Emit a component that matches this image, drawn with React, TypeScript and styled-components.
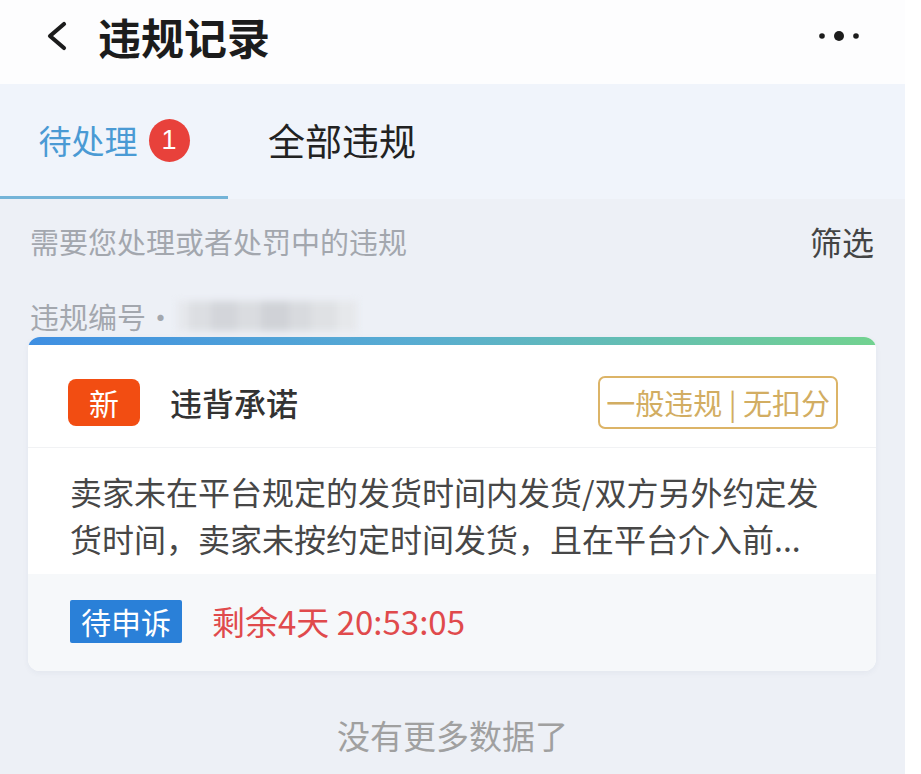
import { FC } from 'react';
import styled, { createGlobalStyle } from 'styled-components';

const GlobalStyle = createGlobalStyle`
  html, body {
    margin: 0;
    padding: 0;
    background: #ffffff;
  }
  body {
    font-family: "Noto Sans CJK SC", "Noto Sans", sans-serif;
  }
  * {
    box-sizing: border-box;
  }
`;

const Page = styled.div`
  width: 905px;
  min-height: 774px;
  background: #edf0f6;
  display: flex;
  flex-direction: column;
`;

const Header = styled.header`
  height: 84px;
  padding: 0 42px 12px 44px;
  background: #fdfdfe;
  display: flex;
  align-items: center;
  gap: 28px;
`;

const Title = styled.h1`
  margin: 0;
  flex: 1;
  font-size: 43px;
  line-height: 50px;
  font-weight: 700;
  color: #1c1c1c;
`;

const TabBar = styled.nav`
  height: 115px;
  background: #f0f4fb;
  display: flex;
`;

const Tab = styled.div<{ $active?: boolean }>`
  width: 228px;
  display: flex;
  align-items: center;
  justify-content: center;
  border-bottom: 3px solid ${({ $active }) => ($active ? '#74b4d8' : 'transparent')};
  font-size: ${({ $active }) => ($active ? '33px' : '37px')};
  color: ${({ $active }) => ($active ? '#4a9ad4' : '#222222')};
`;

const Badge = styled.span`
  width: 41px;
  height: 43px;
  margin-left: 11px;
  border-radius: 50%;
  background: #e8413b;
  color: #ffffff;
  font-family: "Liberation Sans", Arial, sans-serif;
  font-size: 27px;
  display: flex;
  align-items: center;
  justify-content: center;
`;

const SubRow = styled.div`
  height: 84px;
  padding: 0 31px 0 30px;
  display: flex;
  align-items: center;
  justify-content: space-between;
`;

const Hint = styled.span`
  font-size: 29px;
  color: #a3a7ae;
`;

const Filter = styled.span`
  font-size: 32px;
  color: #444444;
`;

const NumberRow = styled.div`
  height: 54px;
  padding: 12px 30px 0;
  display: flex;
  align-items: center;
  font-size: 29px;
  color: #a3a7ae;
`;

const Blurred = styled.span`
  margin-left: 2px;
  display: flex;
  align-items: center;
  filter: blur(3.5px);
`;

const Blot = styled.span<{ $w: number; $tone: string }>`
  width: ${({ $w }) => $w}px;
  height: 30px;
  background: ${({ $tone }) => $tone};
`;

const Card = styled.section`
  margin: 0 29px 0 28px;
  border-radius: 12px;
  overflow: hidden;
  background: #ffffff;
  box-shadow: 0 2px 6px rgba(40, 60, 90, 0.05);
`;

const CardStripe = styled.div`
  height: 8px;
  background: linear-gradient(90deg, #3f8fe2 0%, #58acd2 45%, #72d290 100%);
`;

const CardHead = styled.div`
  height: 103px;
  padding: 12px 38px 0 40px;
  display: flex;
  align-items: center;
  border-bottom: 1px solid #f1f2f4;
`;

const NewMark = styled.span`
  width: 72px;
  height: 47px;
  border-radius: 8px;
  background: #f24d12;
  color: #ffffff;
  font-size: 30px;
  display: flex;
  align-items: center;
  justify-content: center;
`;

const CaseTitle = styled.span`
  flex: 1;
  margin-left: 30px;
  font-size: 32px;
  font-weight: 500;
  color: #333333;
`;

const Level = styled.span`
  height: 53px;
  padding: 0 6px;
  border: 2px solid #dcb467;
  border-radius: 7px;
  color: #d2ad62;
  font-size: 29px;
  display: flex;
  align-items: center;
  white-space: pre;
`;

const Desc = styled.p`
  margin: 0;
  padding: 20px 42px 12px;
  font-size: 32px;
  line-height: 47px;
  color: #474747;
`;

const CardFoot = styled.div`
  height: 97px;
  padding: 0 42px 3px;
  background: #f6f8fa;
  display: flex;
  align-items: center;
  gap: 30px;
`;

const Status = styled.span`
  height: 43px;
  padding: 0 11px;
  border-radius: 2px;
  background: #2a80d8;
  color: #ffffff;
  font-size: 30px;
  display: flex;
  align-items: center;
`;

const Countdown = styled.span`
  font-size: 33px;
  color: #e04a4c;
`;

const EndNote = styled.div`
  margin-top: 44px;
  line-height: 40px;
  text-align: center;
  font-size: 33px;
  color: #a0a0a0;
`;

const BackIcon: FC = () => (
  <svg width="26" height="30" viewBox="0 0 26 30">
    <polyline points="20,3 6,15 20,27" fill="none" stroke="#1c1c1c" strokeWidth="4.2" strokeLinecap="round" strokeLinejoin="round" />
  </svg>
);

const MoreIcon: FC = () => (
  <svg width="48" height="14" viewBox="0 0 48 14">
    <circle cx="7" cy="7" r="2.8" fill="#1c1c1c" />
    <circle cx="24" cy="7" r="5" fill="#1c1c1c" />
    <circle cx="41" cy="7" r="2.8" fill="#1c1c1c" />
  </svg>
);

const blots = [
  { w: 12, tone: '#e6e8ec' },
  { w: 22, tone: '#dcdee2' },
  { w: 26, tone: '#d3d5da' },
  { w: 24, tone: '#dadce0' },
  { w: 28, tone: '#d0d2d7' },
  { w: 22, tone: '#d8dade' },
  { w: 26, tone: '#dfe1e4' },
  { w: 20, tone: '#e6e8eb' },
];

const App: FC = () => {
  return (
    <>
      <GlobalStyle />
      <Page>
        <Header>
          <BackIcon />
          <Title>违规记录</Title>
          <MoreIcon />
        </Header>

        <TabBar>
          <Tab $active>
            待处理
            <Badge>1</Badge>
          </Tab>
          <Tab>全部违规</Tab>
        </TabBar>

        <SubRow>
          <Hint>需要您处理或者处罚中的违规</Hint>
          <Filter>筛选</Filter>
        </SubRow>

        <NumberRow>
          违规编号·
          <Blurred>
            { blots.map((b, i) => (
              <Blot key={ i } $w={ b.w } $tone={ b.tone } />
            )) }
          </Blurred>
        </NumberRow>

        <Card>
          <CardStripe />
          <CardHead>
            <NewMark>新</NewMark>
            <CaseTitle>违背承诺</CaseTitle>
            <Level>一般违规 | 无扣分</Level>
          </CardHead>
          <Desc>
            卖家未在平台规定的发货时间内发货/双方另外约定发货时间，卖家未按约定时间发货，且在平台介入前...
          </Desc>
          <CardFoot>
            <Status>待申诉</Status>
            <Countdown>剩余4天 20:53:05</Countdown>
          </CardFoot>
        </Card>

        <EndNote>没有更多数据了</EndNote>
      </Page>
    </>
  );
};

export default App;
